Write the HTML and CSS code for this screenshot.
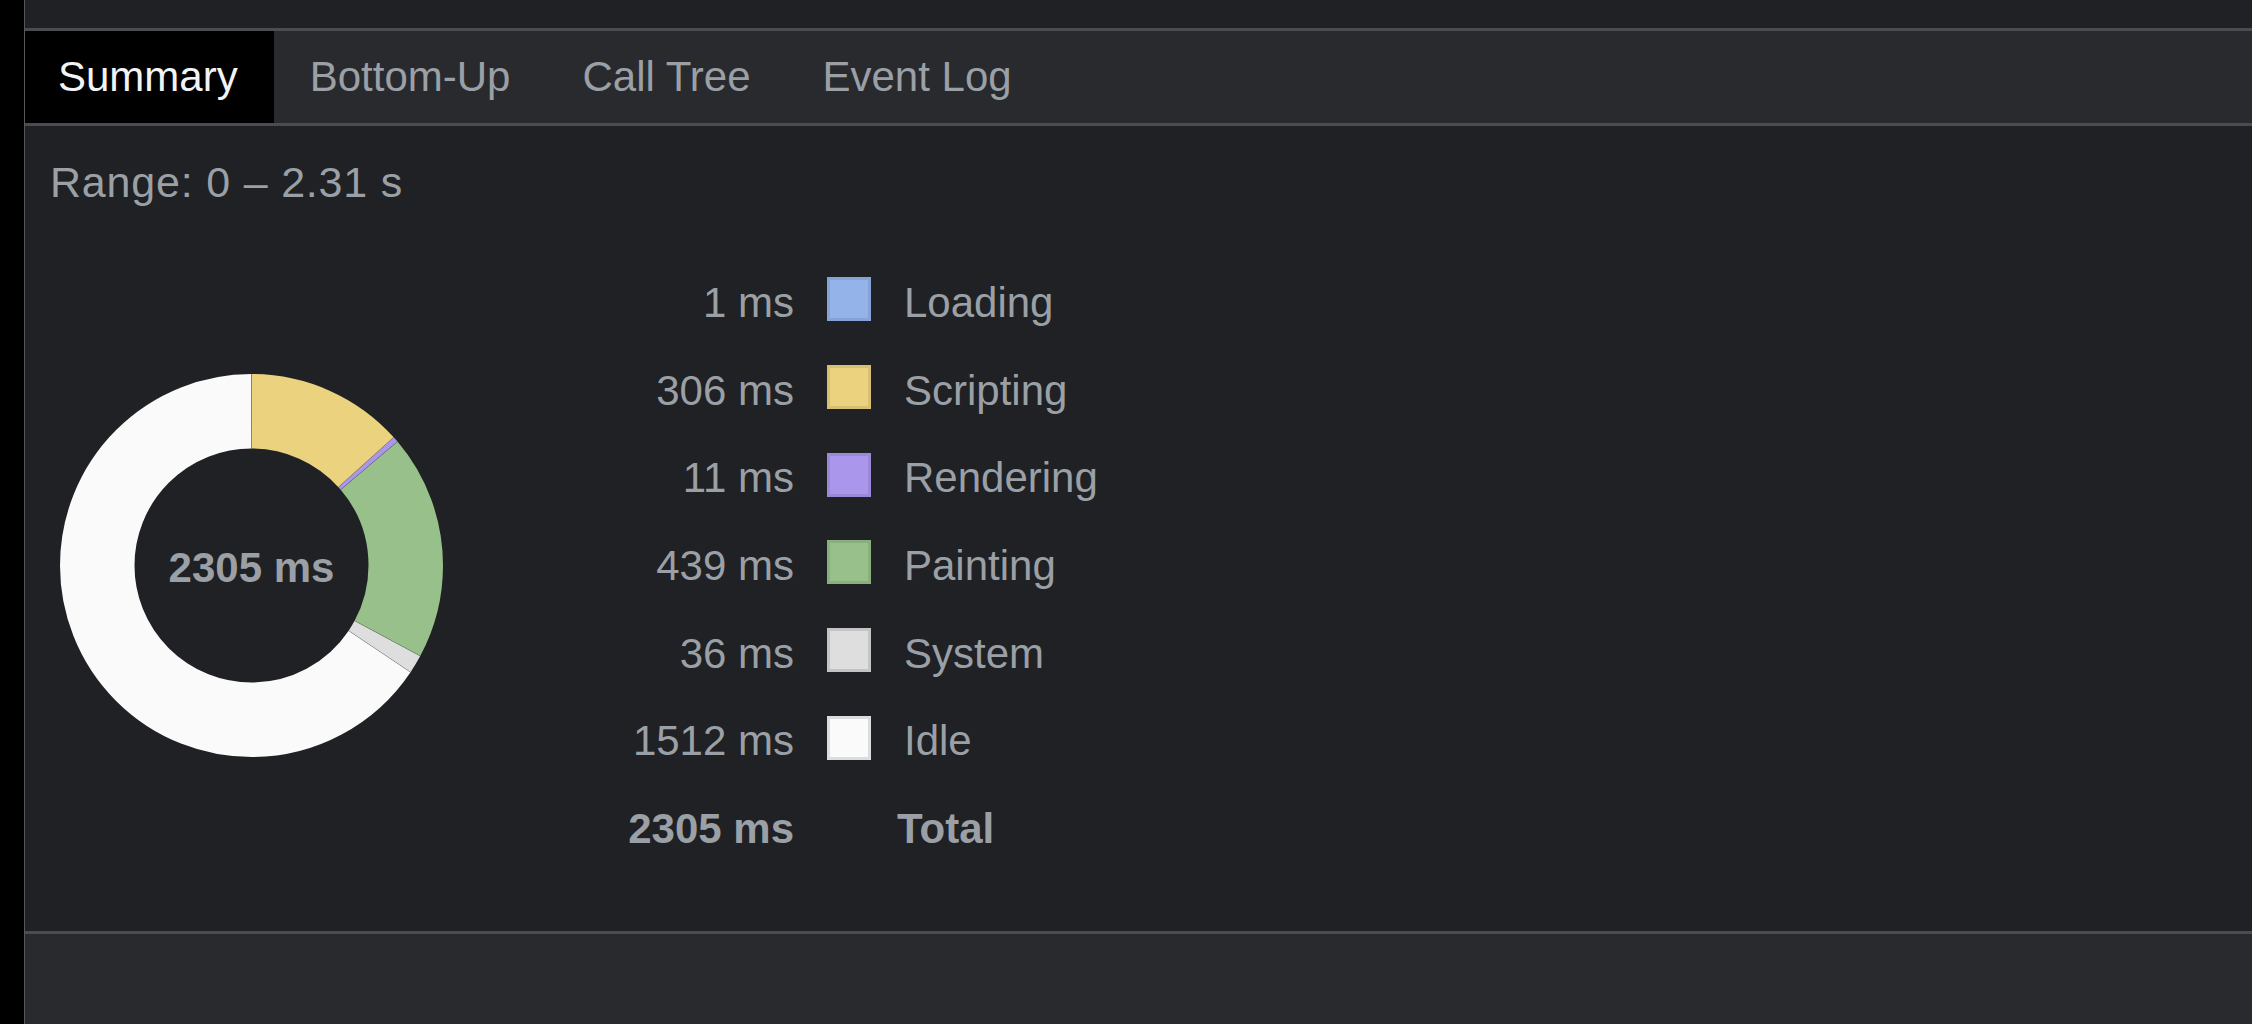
FILE: index.html
```html
<!DOCTYPE html>
<html>
<head>
<meta charset="utf-8">
<title>Summary</title>
<link rel="stylesheet" href="styles.css">
</head>
<body>
<div class="app">
  <div class="gutter"></div>
  <div class="panel">
    <div class="toolbar"></div>
    <div class="tabs">
      <div class="tab active">Summary</div>
      <div class="tab">Bottom-Up</div>
      <div class="tab">Call Tree</div>
      <div class="tab">Event Log</div>
    </div>
    <div class="content">
      <div class="range">Range: 0 – 2.31 s</div>
      <div class="summary">
        <svg class="donut" width="383" height="383" viewBox="0 0 383 383">
          <g transform="rotate(-90 191.5 191.5)" fill="none" stroke-width="74.5">
            <circle cx="191.5" cy="191.5" r="154.25" pathLength="2305" stroke="#fafafa" stroke-dasharray="1512 2305" stroke-dashoffset="-793"/>
            <circle cx="191.5" cy="191.5" r="154.25" pathLength="2305" stroke="#dedede" stroke-dasharray="36 2305" stroke-dashoffset="-757"/>
            <circle cx="191.5" cy="191.5" r="154.25" pathLength="2305" stroke="#98c08a" stroke-dasharray="439 2305" stroke-dashoffset="-318"/>
            <circle cx="191.5" cy="191.5" r="154.25" pathLength="2305" stroke="#aa97eb" stroke-dasharray="11 2305" stroke-dashoffset="-307"/>
            <circle cx="191.5" cy="191.5" r="154.25" pathLength="2305" stroke="#ebd27f" stroke-dasharray="306 2305" stroke-dashoffset="-1"/>
            <circle cx="191.5" cy="191.5" r="154.25" pathLength="2305" stroke="#93b3e9" stroke-dasharray="1 2305" stroke-dashoffset="0"/>
          </g>
          <g class="seps">
            <line x1="191.5" y1="74.5" x2="191.5" y2="0" stroke="#8d9bb0" stroke-width="1"/>
            <line x1="278.36" y1="113.12" x2="333.67" y2="63.21"/>
            <line x1="280.69" y1="115.78" x2="337.48" y2="67.56"/>
            <line x1="294.59" y1="246.82" x2="360.23" y2="282.04"/>
            <line x1="288.65" y1="256.69" x2="350.50" y2="298.20"/>
          </g>
          <text class="donut-total" x="191.5" y="208" text-anchor="middle">2305 ms</text>
        </svg>
        <div class="legend">
          <div class="val">1 ms</div><div class="sw loading"></div><div class="lbl">Loading</div>
          <div class="val">306 ms</div><div class="sw scripting"></div><div class="lbl">Scripting</div>
          <div class="val">11 ms</div><div class="sw rendering"></div><div class="lbl">Rendering</div>
          <div class="val">439 ms</div><div class="sw painting"></div><div class="lbl">Painting</div>
          <div class="val">36 ms</div><div class="sw system"></div><div class="lbl">System</div>
          <div class="val">1512 ms</div><div class="sw idle"></div><div class="lbl">Idle</div>
          <div class="val total">2305 ms</div><div class="empty"></div><div class="lbl total">Total</div>
        </div>
      </div>
    </div>
    <div class="footer"></div>
  </div>
</div>
</body>
</html>
```
FILE: styles.css
```css
html, body {
  margin: 0;
  padding: 0;
  height: 100%;
}

body {
  background: #202124;
  font-family: "Liberation Sans", Arial, Helvetica, sans-serif;
  overflow: hidden;
}

.app {
  display: flex;
  height: 1024px;
}

.gutter {
  width: 24px;
  flex: none;
  background: #000;
  border-right: 1px solid #56585c;
}

.panel {
  flex: 1;
  min-width: 0;
  display: flex;
  flex-direction: column;
}

.toolbar {
  height: 28px;
  flex: none;
  background: #202124;
}

.tabs {
  height: 92px;
  flex: none;
  display: flex;
  background: #292a2e;
  border-top: 3px solid #4a4c50;
  border-bottom: 3px solid #4a4c50;
}

.tab {
  display: flex;
  align-items: center;
  padding: 0 36px;
  font-size: 42px;
  color: #9aa0a6;
  white-space: nowrap;
}

.tab.active {
  background: #000;
  color: #f1f3f4;
  padding: 0 36px 0 33px;
}

.content {
  flex: 1;
  min-height: 0;
  padding: 31px 0 0 25px;
  background: #202124;
}

.range {
  font-size: 43px;
  line-height: 50px;
  letter-spacing: 0.8px;
  color: #9aa0a6;
}

.summary {
  display: flex;
  align-items: center;
  margin-top: 52px;
}

.donut {
  flex: none;
  display: block;
  margin-left: 10px;
  margin-right: 150px;
}

.seps line {
  stroke: rgba(0, 0, 0, 0.22);
  stroke-width: 0.8;
}

.donut-total {
  font-family: "Liberation Sans", Arial, Helvetica, sans-serif;
  font-weight: bold;
  font-size: 42px;
  fill: #9aa0a6;
}

.legend {
  display: grid;
  grid-template-columns: 201px 44px auto;
  grid-auto-rows: 87.7px;
  column-gap: 33px;
  align-items: center;
  color: #9aa0a6;
  font-size: 42px;
}

.val {
  text-align: right;
  white-space: nowrap;
}

.lbl {
  white-space: nowrap;
}

.total {
  font-weight: bold;
}

.lbl.total {
  margin-left: -7px;
}

.sw {
  width: 44px;
  height: 44px;
  box-sizing: border-box;
  border: 3px solid rgba(0, 0, 0, 0.1);
  margin-bottom: 7px;
}

.sw.loading { background: #93b3e9; border-color: #86a2d6; }
.sw.scripting { background: #ebd27f; border-color: #d8c073; }
.sw.rendering { background: #aa97eb; border-color: #9a89d6; }
.sw.painting { background: #98c08a; border-color: #8aaf7e; }
.sw.system { background: #dedede; border-color: #c4c4c4; }
.sw.idle { background: #fafafa; border-color: #dcdcdc; }

.footer {
  height: 90px;
  flex: none;
  background: #292a2e;
  border-top: 3px solid #4a4c50;
}
```
